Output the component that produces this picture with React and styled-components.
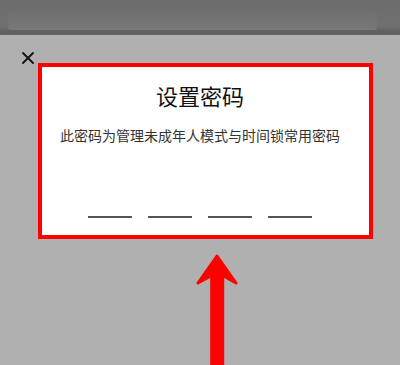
import React from 'react'
import styled, { createGlobalStyle } from 'styled-components'

const GlobalStyle = createGlobalStyle`
  html, body {
    margin: 0;
    padding: 0;
    background: #b0b0b0;
    font-family: "Noto Sans CJK SC", "Noto Sans", sans-serif;
  }
`

function CloseIcon() {
  return (
    <CloseBox>
      <svg width="12" height="12" viewBox="0 0 12 12">
        <path d="M1 1 L11 11 M11 1 L1 11" stroke="#111" strokeWidth="1.8" strokeLinecap="round" />
      </svg>
    </CloseBox>
  )
}

function UpArrow() {
  return (
    <ArrowRow>
      <svg width="44" height="112" viewBox="0 0 44 112">
        <path
          d="M22 3 L3 30 L16.7 22.5 L16.7 112 L27.7 112 L27.7 22.5 L41 30 Z"
          fill="#ff0000"
          stroke="#ff0000"
          strokeWidth="3"
          strokeLinejoin="round"
        />
      </svg>
    </ArrowRow>
  )
}

function App() {
  const slots = [0, 1, 2, 3]
  return (
    <Page>
      <GlobalStyle />
      <TopBar>
        <TopBand />
      </TopBar>
      <Main>
        <DialogRow>
          <CloseIcon />
          <Dialog>
            <Title>设置密码</Title>
            <Hint>此密码为管理未成年人模式与时间锁常用密码</Hint>
            <Slots>
              {slots.map(i => <Slot key={i} />)}
            </Slots>
          </Dialog>
        </DialogRow>
        <UpArrow />
      </Main>
    </Page>
  )
}

export default App

const Page = styled.div`
  width: 400px;
  height: 365px;
  overflow: hidden;
  display: flex;
  flex-direction: column;
  background: #b0b0b0;
`
const TopBar = styled.div`
  height: 37px;
  box-sizing: border-box;
  padding: 10px 23px 0 8px;
  background: linear-gradient(#6c6c6c, #707070 75%, #5e5e5e 92%, #666 100%);
`
const TopBand = styled.div`
  height: 20px;
  border-radius: 3px;
  background: linear-gradient(#6f6f6f, #757575 70%, #7a7a7a);
`
const Main = styled.div`
  flex: 1;
  display: flex;
  flex-direction: column;
`
const DialogRow = styled.div`
  display: flex;
  align-items: flex-start;
  padding-left: 22px;
`
const CloseBox = styled.div`
  width: 12px;
  height: 12px;
  margin-top: 17px;
  display: flex;
`
const Dialog = styled.div`
  margin-top: 28px;
  margin-left: 4px;
  width: 335px;
  height: 176px;
  box-sizing: border-box;
  border: 4px solid #ff0000;
  background: #fff;
  padding: 0 11px 0 0;
  display: flex;
  flex-direction: column;
  align-items: center;
`
const Title = styled.div`
  margin-top: 13px;
  font-size: 22px;
  line-height: 30px;
  color: #111;
`
const Hint = styled.div`
  margin-top: 15px;
  font-size: 14px;
  line-height: 20px;
  color: #333;
`
const Slots = styled.div`
  margin-top: 71px;
  display: flex;
  gap: 16px;
`
const Slot = styled.div`
  width: 44px;
  height: 1.5px;
  background: #555;
`
const ArrowRow = styled.div`
  display: flex;
  padding-left: 195px;
  margin-top: 14px;
`
